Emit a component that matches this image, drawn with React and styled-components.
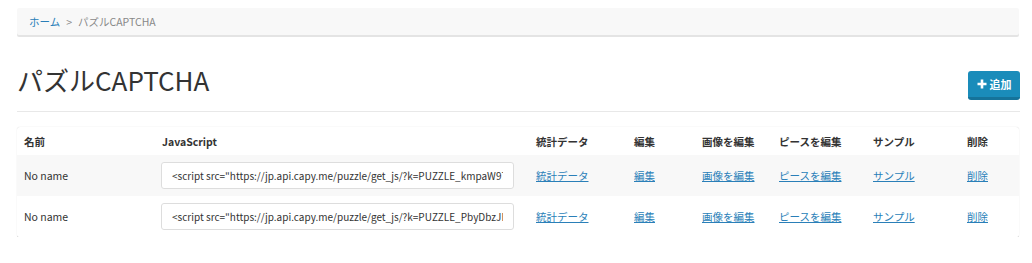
import styled, { createGlobalStyle } from 'styled-components'

// Style
const GlobalStyle = createGlobalStyle`
  body {
    margin: 0;
    background: #ffffff;
    font-family: 'Noto Sans CJK JP', 'Noto Sans', sans-serif;
    color: #333333;
  }
`
const Page = styled.div`
  padding: 8px 12px 0 17px;
`
const Breadcrumb = styled.nav`
  display: flex;
  align-items: center;
  gap: 6px;
  height: 27px;
  padding: 0 12px;
  background: #f8f8f8;
  border-radius: 2px;
  box-shadow: 0 2px 0 #e4e4e4;
  font-size: 10.5px;
  color: #888888;
  margin-right: 1px;
`
const CrumbLink = styled.a`
  color: #2a7fb8;
  text-decoration: none;
`
const Header = styled.div`
  display: flex;
  align-items: flex-start;
  justify-content: space-between;
  margin-top: 28px;
  padding-bottom: 11px;
  border-bottom: 1px solid #e8e8e8;
`
const Title = styled.h1`
  margin: 0;
  font-size: 26px;
  font-weight: 400;
  line-height: 34px;
  color: #333333;
`
const AddButton = styled.button`
  display: flex;
  align-items: center;
  gap: 3px;
  height: 29px;
  width: 52px;
  justify-content: center;
  border: none;
  border-bottom: 3px solid #15739a;
  border-radius: 3px;
  background: #1a8cba;
  color: #ffffff;
  font-family: inherit;
  font-size: 11px;
  font-weight: 700;
  padding: 0;
  margin-top: 8px;
`
const Panel = styled.div`
  margin-top: 15px;
  margin-right: 1px;
  background: #ffffff;
  border-radius: 3px;
  box-shadow: 0 0 1px rgba(0, 0, 0, 0.2), 0 3px 0 #e2e2e2;
  overflow: hidden;
`
const Table = styled.table`
  width: 100%;
  border-collapse: collapse;
  table-layout: fixed;
  font-size: 10.5px;
`
const Th = styled.th`
  text-align: left;
  font-weight: 700;
  height: 28px;
  padding: 0 7px;
  color: #333333;
`
const Row = styled.tr`
  background: ${({ $striped }) => ($striped ? '#f8f8f8' : '#ffffff')};
`
const Td = styled.td`
  height: 41px;
  padding: 0 7px;
  color: #333333;
  white-space: nowrap;
`
const CodeInput = styled.input`
  box-sizing: border-box;
  width: 353px;
  height: 27px;
  padding: 0 10px;
  border: 1px solid #dddddd;
  border-radius: 3px;
  background: #ffffff;
  font-family: inherit;
  font-size: 10px;
  color: #333333;
  margin-left: -1px;
`
const Link = styled.a`
  color: #2a7fb8;
  text-decoration: underline;
`

const columns = [
  { label: '名前', width: 138 },
  { label: 'JavaScript', width: 374 },
  { label: '統計データ', width: 98 },
  { label: '編集', width: 68 },
  { label: '画像を編集', width: 77 },
  { label: 'ピースを編集', width: 94 },
  { label: 'サンプル', width: 94 },
  { label: '削除', width: 59 },
]

const actions = ['統計データ', '編集', '画像を編集', 'ピースを編集', 'サンプル', '削除']

const puzzles = [
  { name: 'No name', key: 'PUZZLE_kmpaW9777L3' },
  { name: 'No name', key: 'PUZZLE_PbyDbzJF1b5c' },
]

function PlusIcon() {
  return (
    <svg width="10" height="10" viewBox="0 0 10 10">
      <path d="M5 0.5v9M0.5 5h9" stroke="#ffffff" strokeWidth="2.6" />
    </svg>
  )
}

// Component
function App() {
  return (
    <Page>
      <GlobalStyle />
      <Breadcrumb>
        <CrumbLink href="#">ホーム</CrumbLink>
        <span>&gt;</span>
        <span>パズルCAPTCHA</span>
      </Breadcrumb>
      <Header>
        <Title>パズルCAPTCHA</Title>
        <AddButton>
          <PlusIcon />
          追加
        </AddButton>
      </Header>
      <Panel>
        <Table>
          <colgroup>
            {columns.map((col) => (
              <col key={`col-${col.label}`} style={{ width: col.width }} />
            ))}
          </colgroup>
          <thead>
            <tr>
              {columns.map((col) => (
                <Th key={`th-${col.label}`}>{col.label}</Th>
              ))}
            </tr>
          </thead>
          <tbody>
            {puzzles.map((puzzle, index) => (
              <Row key={`row-${puzzle.key}`} $striped={index % 2 === 0}>
                <Td>{puzzle.name}</Td>
                <Td>
                  <CodeInput
                    readOnly
                    value={`<script src="https://jp.api.capy.me/puzzle/get_js/?k=${puzzle.key}"></script>`}
                  />
                </Td>
                {actions.map((action) => (
                  <Td key={`${puzzle.key}-${action}`}>
                    <Link href="#">{action}</Link>
                  </Td>
                ))}
              </Row>
            ))}
          </tbody>
        </Table>
      </Panel>
    </Page>
  )
}

export default App
